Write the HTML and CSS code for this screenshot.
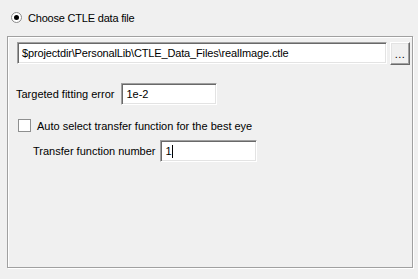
FILE: index.html
```html
<!DOCTYPE html>
<html>
<head>
<meta charset="utf-8">
<link rel="stylesheet" href="styles.css">
</head>
<body>
<div class="dialog">
  <label class="radio-row">
    <span class="radio"><span class="dot"></span></span>
    <span class="label">Choose CTLE data file</span>
  </label>
  <div class="group">
    <div class="path-row">
      <div class="field path">$projectdir\PersonalLib\CTLE_Data_Files\realImage.ctle</div>
      <div class="button">...</div>
    </div>
    <div class="row err-row">
      <span class="label">Targeted fitting error</span>
      <div class="field small err">1e-2</div>
    </div>
    <label class="check-row">
      <span class="checkbox"></span>
      <span class="label">Auto select transfer function for the best eye</span>
    </label>
    <div class="row num-row">
      <span class="label">Transfer function number</span>
      <div class="field small num">1<span class="caret"></span></div>
    </div>
  </div>
</div>
</body>
</html>
```

FILE: styles.css
```css
html, body {
  margin: 0;
  padding: 0;
  background: #f0f0f0;
}
body {
  width: 418px;
  height: 279px;
  overflow: hidden;
  font-family: "Liberation Sans", Arial, sans-serif;
  font-size: 11px;
  color: #000;
}
.dialog {
  display: flex;
  flex-direction: column;
  padding-top: 11px;
}
.radio-row {
  display: flex;
  align-items: center;
  gap: 6px;
  margin-left: 11px;
  height: 13px;
}
.radio-row .label {
  letter-spacing: -0.2px;
}
.radio {
  width: 11px;
  height: 11px;
  border-radius: 50%;
  background: #fff;
  border: 1px solid #8a8a8a;
  box-sizing: border-box;
  display: flex;
  align-items: center;
  justify-content: center;
}
.dot {
  width: 5px;
  height: 5px;
  border-radius: 50%;
  background: #000;
}
.group {
  margin-top: 12px;
  margin-left: 7px;
  width: 406px;
  height: 232px;
  box-sizing: border-box;
  border: 1px solid #a0a0a0;
  box-shadow: inset 1px 1px 0 #fff, 1px 1px 0 #fff;
  display: flex;
  flex-direction: column;
  padding: 5px 0 0 9px;
}
.path-row {
  display: flex;
  align-items: flex-start;
  gap: 3px;
}
.field {
  background: #fff;
  box-sizing: border-box;
  height: 22px;
  border-top: 1px solid #a0a0a0;
  border-left: 1px solid #a0a0a0;
  border-right: 1px solid #fff;
  border-bottom: 1px solid #fff;
  box-shadow: inset 1px 1px 0 #696969, inset -1px -1px 0 #e3e3e3;
  padding: 0 4px;
  display: flex;
  align-items: center;
  white-space: nowrap;
}
.path {
  width: 370px;
  letter-spacing: -0.15px;
}
.button {
  width: 20px;
  height: 23px;
  box-sizing: border-box;
  border-top: 1px solid #fff;
  border-left: 1px solid #fff;
  border-right: 1px solid #696969;
  border-bottom: 1px solid #696969;
  box-shadow: inset -1px -1px 0 #a0a0a0, inset 1px 1px 0 #e3e3e3;
  background: #f0f0f0;
  display: flex;
  align-items: flex-end;
  justify-content: center;
  padding-bottom: 4px;
  line-height: 11px;
  letter-spacing: 0.5px;
}
.row {
  display: flex;
  align-items: center;
}
.err-row {
  margin-top: 18px;
  margin-left: -1px;
  gap: 7px;
}
.small.err {
  width: 96px;
}
.check-row {
  display: flex;
  align-items: center;
  gap: 6px;
  margin-top: 14px;
  margin-left: 1px;
}
.checkbox {
  width: 13px;
  height: 13px;
  box-sizing: border-box;
  background: #fff;
  border: 1px solid #8e8f8f;
}
.num-row {
  margin-top: 8px;
  margin-left: 16px;
  gap: 5px;
}
.small.num {
  width: 97px;
}
.caret {
  display: inline-block;
  width: 1px;
  height: 13px;
  background: #000;
}
```
